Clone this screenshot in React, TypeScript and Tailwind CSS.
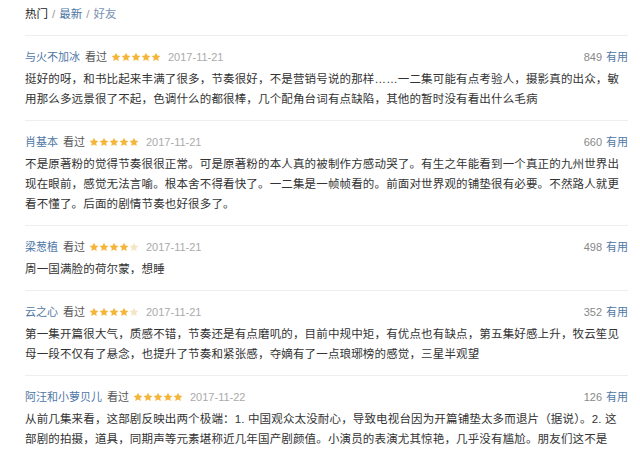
import React from 'react'

type Review = {
  name: string
  rating: number
  date: string
  votes: number
  lines: string[]
}

const reviews: Review[] = [
  {
    name: '与火不加冰',
    rating: 5,
    date: '2017-11-21',
    votes: 849,
    lines: [
      '挺好的呀，和书比起来丰满了很多，节奏很好，不是营销号说的那样……一二集可能有点考验人，摄影真的出众，敏',
      '用那么多远景很了不起，色调什么的都很棒，几个配角台词有点缺陷，其他的暂时没有看出什么毛病',
    ],
  },
  {
    name: '肖基本',
    rating: 5,
    date: '2017-11-21',
    votes: 660,
    lines: [
      '不是原著粉的觉得节奏很很正常。可是原著粉的本人真的被制作方感动哭了。有生之年能看到一个真正的九州世界出',
      '现在眼前，感觉无法言喻。根本舍不得看快了。一二集是一帧帧看的。前面对世界观的铺垫很有必要。不然路人就更',
      '看不懂了。后面的剧情节奏也好很多了。',
    ],
  },
  {
    name: '梁葱植',
    rating: 4,
    date: '2017-11-21',
    votes: 498,
    lines: ['周一国满脸的荷尔蒙，想睡'],
  },
  {
    name: '云之心',
    rating: 4,
    date: '2017-11-21',
    votes: 352,
    lines: [
      '第一集开篇很大气，质感不错，节奏还是有点磨叽的，目前中规中矩，有优点也有缺点，第五集好感上升，牧云笙见',
      '母一段不仅有了悬念，也提升了节奏和紧张感，夺嫡有了一点琅琊榜的感觉，三星半观望',
    ],
  },
  {
    name: '阿汪和小萝贝儿',
    rating: 5,
    date: '2017-11-22',
    votes: 126,
    lines: [
      '从前几集来看，这部剧反映出两个极端：1. 中国观众太没耐心，导致电视台因为开篇铺垫太多而退片（据说）。2. 这',
      '部剧的拍摄，道具，同期声等元素堪称近几年国产剧颜值。小演员的表演尤其惊艳，几乎没有尴尬。朋友们这不是',
      '《天空城》那种雷人剧，是需要用心看完每一集的认真讲故事的高品质剧，让人欣喜。',
    ],
  },
]

const Star = ({ on }: { on: boolean }) => (
  <svg width="10" height="10" viewBox="0 0 24 24">
    <path
      d="M12 1.5l3.2 6.9 7.5.9-5.6 5.1 1.5 7.4L12 18.1l-6.6 3.7 1.5-7.4-5.6-5.1 7.5-.9z"
      fill={on ? '#f4b63a' : '#f3e6c6'}
    />
  </svg>
)

const Stars = ({ rating }: { rating: number }) => (
  <span className="flex items-center">
    {[0, 1, 2, 3, 4].map((i) => (
      <Star key={i} on={i < rating} />
    ))}
  </span>
)

export default function App() {
  return (
    <div
      className="w-[640px] h-[451px] overflow-hidden bg-white"
      style={{ fontFamily: '"Liberation Sans", "Noto Sans CJK SC", sans-serif' }}
    >
      <div className="pl-[25px] pr-[12px]">
        {/* Tabs */}
        <div className="flex items-center h-[35px] pb-[6px] text-[11.5px]">
          <span className="text-[#222]">热门</span>
          <span className="mx-[4px] text-[#999]">/</span>
          <span className="text-[#4a74a3]">最新</span>
          <span className="mx-[4px] text-[#999]">/</span>
          <span className="text-[#7b93b3]">好友</span>
        </div>

        {reviews.map((r) => (
          <div key={r.name} className="border-t border-[#eeeeee] pt-[11px] pb-[11px]">
            <div className="flex items-center justify-between h-[20px] text-[11px]">
              <div className="flex items-center">
                <span className="text-[#4f77a6]">{r.name}</span>
                <span className="ml-[5px] mr-[4px] text-[#555]">看过</span>
                <Stars rating={r.rating} />
                <span className="ml-[7px] text-[#aaa]">{r.date}</span>
              </div>
              <div className="flex items-center">
                <span className="text-[#888]">{r.votes}</span>
                <span className="ml-[4px] text-[#4f77a6]">有用</span>
              </div>
            </div>
            <div className="mt-[2px] text-[11.5px] tracking-[0.15px] leading-[20px] text-[#333]">
              {r.lines.map((l, i) => (
                <div key={i} className="whitespace-nowrap">
                  {l}
                </div>
              ))}
            </div>
          </div>
        ))}
      </div>
    </div>
  )
}
